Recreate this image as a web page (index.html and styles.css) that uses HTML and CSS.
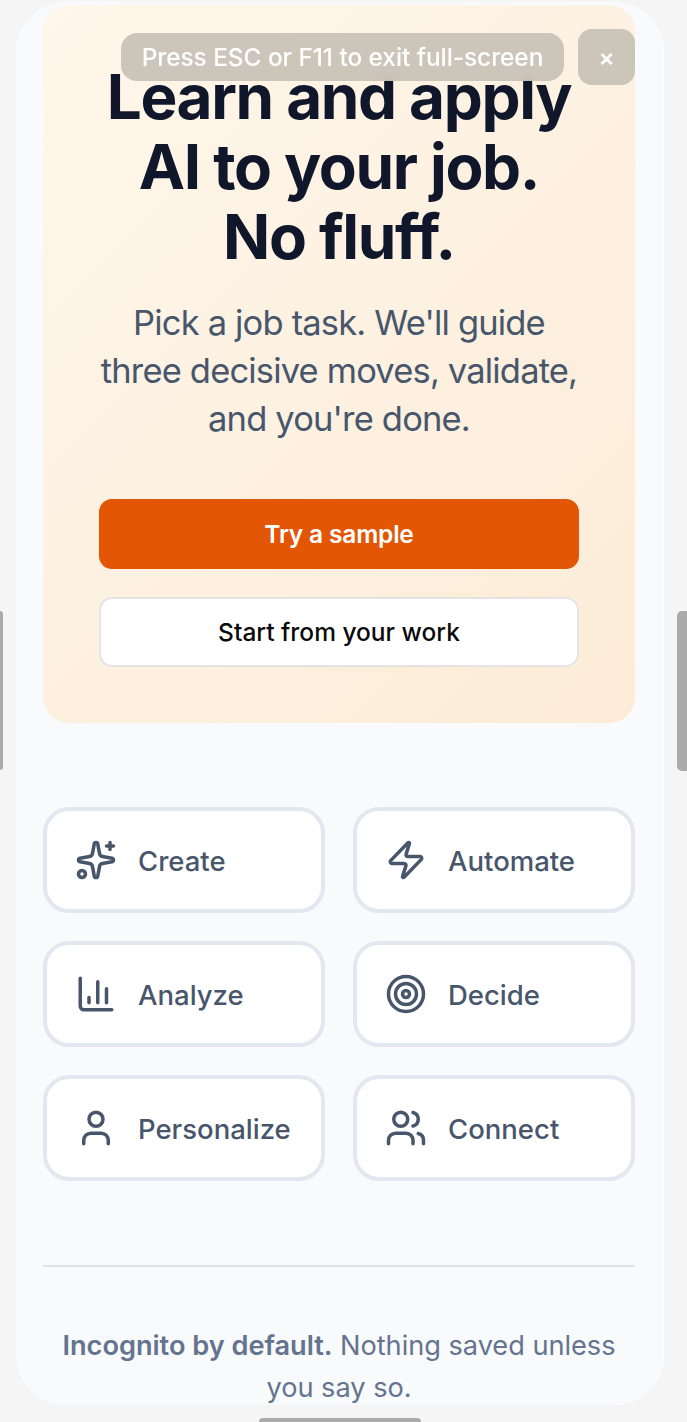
FILE: index.html
```html
<!DOCTYPE html>
<html lang="en">
<head>
<meta charset="utf-8">
<title>Learn and apply AI to your job</title>
<link rel="stylesheet" href="styles.css">
</head>
<body>
<div class="handle handle-left"></div>
<div class="handle handle-right"></div>
<div class="handle handle-bottom"></div>
<div class="screen">
  <section class="hero">
    <h1 class="title">Learn and apply<br>AI to your job.<br>No fluff.</h1>
    <p class="lead">Pick a job task. We'll guide<br>three decisive moves, validate,<br>and you're done.</p>
    <div class="actions">
      <button class="btn btn-primary">Try a sample</button>
      <button class="btn btn-outline">Start from your work</button>
    </div>
  </section>
  <section class="grid">
    <div class="card">
      <svg class="icon" viewBox="0 0 24 24"><path d="M11.017 2.814a1 1 0 0 1 1.966 0l1.051 5.558a2 2 0 0 0 1.594 1.594l5.558 1.051a1 1 0 0 1 0 1.966l-5.558 1.051a2 2 0 0 0-1.594 1.594l-1.051 5.558a1 1 0 0 1-1.966 0l-1.051-5.558a2 2 0 0 0-1.594-1.594l-5.558-1.051a1 1 0 0 1 0-1.966l5.558-1.051a2 2 0 0 0 1.594-1.594z"/><path d="M20 2v4"/><path d="M22 4h-4"/><circle cx="4" cy="20" r="2"/></svg>
      <span class="label">Create</span>
    </div>
    <div class="card">
      <svg class="icon" viewBox="0 0 24 24"><path d="M4 14a1 1 0 0 1-.78-1.63l9.9-10.2a.5.5 0 0 1 .86.46l-1.92 6.02A1 1 0 0 0 13 10h7a1 1 0 0 1 .78 1.63l-9.9 10.2a.5.5 0 0 1-.86-.46l1.92-6.02A1 1 0 0 0 11 14z"/></svg>
      <span class="label">Automate</span>
    </div>
    <div class="card">
      <svg class="icon" viewBox="0 0 24 24"><path d="M3 3v16a2 2 0 0 0 2 2h16"/><path d="M18 17V9"/><path d="M13 17V5"/><path d="M8 17v-3"/></svg>
      <span class="label">Analyze</span>
    </div>
    <div class="card">
      <svg class="icon" viewBox="0 0 24 24"><circle cx="12" cy="12" r="10"/><circle cx="12" cy="12" r="6"/><circle cx="12" cy="12" r="2"/></svg>
      <span class="label">Decide</span>
    </div>
    <div class="card">
      <svg class="icon" viewBox="0 0 24 24"><path d="M19 21v-2a4 4 0 0 0-4-4H9a4 4 0 0 0-4 4v2"/><circle cx="12" cy="7" r="4"/></svg>
      <span class="label">Personalize</span>
    </div>
    <div class="card">
      <svg class="icon" viewBox="0 0 24 24"><path d="M16 21v-2a4 4 0 0 0-4-4H6a4 4 0 0 0-4 4v2"/><path d="M16 3.128a4 4 0 0 1 0 7.744"/><path d="M22 21v-2a4 4 0 0 0-3-3.87"/><circle cx="9" cy="7" r="4"/></svg>
      <span class="label">Connect</span>
    </div>
  </section>
  <footer class="note"><strong>Incognito by default.</strong> Nothing saved unless<br>you say so.</footer>
</div>
<div class="toast">
  <div class="toast-text">Press ESC or F11 to exit full-screen</div>
  <div class="toast-close">×</div>
</div>
</body>
</html>
```
FILE: styles.css
```css
* { box-sizing: border-box; }
body {
  position: relative;
  height: 1422px;
  margin: 0;
  padding: 2px 23px 0 16px;
  overflow: hidden;
  background: #f5f5f5;
  font-family: Inter, "Liberation Sans", sans-serif;
}
.screen {
  height: 1403px;
  padding: 3px 28px 0 27px;
  overflow: hidden;
  border-right: 1px solid #fff;
  border-radius: 50px;
  background: #f9fafc;
}
.hero {
  height: 718px;
  padding: 57px 56px 56px;
  border-radius: 26px;
  background: linear-gradient(135deg, #fff7eb 0%, #fdf1e1 50%, #fcecd7 100%);
  text-align: center;
}
.title {
  margin: 0 -20px 27px;
  color: #10172a;
  font-size: 62px;
  font-weight: 700;
  line-height: 70px;
  letter-spacing: -1.35px;
}
.lead {
  margin: 0 -20px 56px;
  color: #48566c;
  font-size: 34.5px;
  font-weight: 430;
  line-height: 48px;
  letter-spacing: -.83px;
}
.actions { display: flex; flex-direction: column; gap: 28px; }
.btn {
  height: 70px;
  padding: 0;
  border: 0;
  border-radius: 13px;
  font-family: inherit;
  font-size: 24.5px;
}
.btn-primary {
  background: #e25606;
  color: #fff;
  font-weight: 600;
  letter-spacing: -.18px;
}
.btn-outline {
  border: 2px solid #e4e4e7;
  background: #fff;
  color: #0a0a0a;
  font-weight: 500;
}
.grid {
  display: grid;
  grid-template-columns: 1fr 1fr;
  gap: 28px;
  margin-top: 84px;
}
.card {
  display: flex;
  align-items: center;
  gap: 21px;
  height: 106px;
  padding: 0 28px;
  border: 4px solid #e2e7f0;
  border-radius: 26px;
  background: #fff;
  color: #48566c;
  font-size: 27.5px;
  font-weight: 500;
}
.label { padding-top: 2px; }
.icon {
  width: 42px;
  height: 42px;
  fill: none;
  stroke: currentColor;
  stroke-width: 2;
  stroke-linecap: round;
  stroke-linejoin: round;
}
.note {
  margin-top: 84px;
  padding-top: 58px;
  border-top: 2px solid #e0e2e5;
  color: #64748f;
  font-size: 27.2px;
  font-weight: 430;
  line-height: 42px;
  letter-spacing: -.03px;
  text-align: center;
  white-space: nowrap;
}
.note strong { font-weight: 600; }
.toast {
  position: absolute;
  top: 29px;
  left: 121px;
  display: flex;
  align-items: center;
  gap: 14px;
  color: #fff;
}
.toast-text, .toast-close {
  display: flex;
  align-items: center;
  justify-content: center;
  background: rgba(202, 195, 183, .96);
  backdrop-filter: blur(8px);
}
.toast-text {
  width: 443px;
  height: 48px;
  border-radius: 16px;
  font-size: 24.4px;
  font-weight: 500;
  letter-spacing: -.04px;
  white-space: nowrap;
}
.toast-close {
  width: 57px;
  height: 56px;
  border-radius: 14px;
  font-size: 24px;
  font-weight: 600;
}
.handle { position: absolute; background: #ababab; }
.handle-left { top: 611px; left: 0; width: 3px; height: 159px; border-radius: 0 4px 4px 0; }
.handle-right { top: 611px; right: 0; width: 10px; height: 160px; border-radius: 5px 0 0 5px; }
.handle-bottom { top: 1418px; left: 259px; width: 162px; height: 4px; border-radius: 5px 5px 0 0; }
```
